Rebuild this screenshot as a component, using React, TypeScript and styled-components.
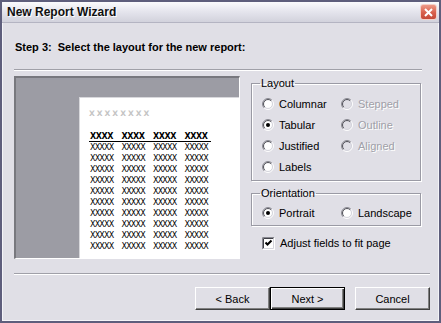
import React from "react"
import styled, { createGlobalStyle } from "styled-components"

const GlobalStyle = createGlobalStyle`
    html, body {
        margin: 0;
        padding: 0;
        background: #e0dfe6;
    }
    * {
        box-sizing: border-box;
    }
`

const FONT = `"Liberation Sans", Arial, sans-serif`

const Window = styled.div`
    width: 441px;
    height: 323px;
    display: flex;
    flex-direction: column;
    border: 2px solid #5e5e7c;
    box-shadow: inset 0 0 0 1px #f4f4f8;
    background: #e0dfe6;
    font-family: ${FONT};
    font-size: 11px;
    color: #000;
    overflow: hidden;
`

const TitleBar = styled.div`
    height: 21px;
    flex: none;
    display: flex;
    align-items: center;
    justify-content: space-between;
    padding: 0 2px 0 5px;
    background: linear-gradient(to bottom, #fbfbfd 0%, #e6e6ee 45%, #d2d2dc 100%);
    border-bottom: 1px solid #b4b4c2;
`

const Title = styled.div`
    font-weight: bold;
    font-size: 12px;
    color: #101010;
    text-shadow: 1px 1px 0 #ffffff;
`

const CloseButton = styled.div`
    width: 17px;
    height: 16px;
    border-radius: 3px;
    border: 1px solid #f4d0c8;
    background: linear-gradient(to bottom, #ee9a88 0%, #d8604c 55%, #c44a38 100%);
    display: flex;
    align-items: center;
    justify-content: center;
`

const Body = styled.div`
    flex: 1;
    display: flex;
    flex-direction: column;
    padding: 17px 9px 11px 12px;
`

const StepTitle = styled.div`
    font-weight: bold;
    font-size: 11px;
    line-height: 14px;
    padding-left: 1px;
    white-space: nowrap;
`

const Separator = styled.div<{ inset?: number }>`
    height: 2px;
    flex: none;
    margin-right: ${({ inset }) => inset || 0}px;
    border-top: 1px solid #a0a0a8;
    border-bottom: 1px solid #ffffff;
`

const Main = styled.div`
    display: flex;
    gap: 11px;
    margin: 5px 0 14px;
    height: 183px;
`

const Preview = styled.div`
    width: 226px;
    height: 183px;
    display: flex;
    justify-content: flex-end;
    align-items: flex-end;
    background: #9c9ca4;
    border-top: 2px solid #78787e;
    border-left: 2px solid #78787e;
    border-right: 1px solid #ffffff;
    border-bottom: 1px solid #ffffff;
`

const Page = styled.div`
    width: 160px;
    height: 161px;
    background: #ffffff;
    border-top: 1px solid #d8d8dc;
    border-left: 1px solid #d8d8dc;
    padding: 11px 0 0 9px;
    font-family: "DejaVu Sans", sans-serif;
`

const PageTitle = styled.div`
    font-weight: bold;
    font-size: 7.5px;
    line-height: 10px;
    letter-spacing: 2px;
    color: #c4c4c4;
`

const Table = styled.div`
    margin-top: 13px;
    width: 122px;
`

const HeaderRow = styled.div`
    display: grid;
    grid-template-columns: repeat(4, 31.5px);
    font-weight: bold;
    font-size: 8px;
    line-height: 9px;
    letter-spacing: -0.4px;
    padding-left: 1px;
    border-bottom: 1px solid #000;
`

const DataRow = styled.div`
    display: grid;
    grid-template-columns: repeat(4, 31.5px);
    font-size: 8px;
    line-height: 11px;
    letter-spacing: -0.8px;
    padding-left: 1px;
`

const Cell = styled.span`
    white-space: nowrap;
`

const Side = styled.div`
    width: 170px;
    display: flex;
    flex-direction: column;
`

const Group = styled.fieldset<{ gapTop?: number }>`
    margin: ${({ gapTop }) => gapTop || 0}px 0 0 0;
    padding: 3px 0 3px 10px;
    min-width: 0;
    border: 1px solid #9a9aa4;
    box-shadow: inset 1px 1px 0 #ffffff, 1px 1px 0 #ffffff;
`

const GroupLegend = styled.legend`
    padding: 0 1px;
    margin-left: -2px;
    line-height: 14px;
    font-size: 11px;
`

const OptionGrid = styled.div`
    display: grid;
    grid-template-columns: 79px 1fr;
    grid-auto-rows: 21px;
    align-items: center;
`

const Option = styled.label<{ disabled?: boolean }>`
    display: flex;
    align-items: center;
    gap: 5px;
    white-space: nowrap;
    color: ${({ disabled }) => (disabled ? "#a0a0a8" : "#000000")};
    text-shadow: ${({ disabled }) => (disabled ? "1px 1px 0 #ffffff" : "none")};
`

const CheckRow = styled.label`
    display: flex;
    align-items: center;
    gap: 5px;
    height: 16px;
    margin: 9px 0 0 11px;
    white-space: nowrap;
`

const Footer = styled.div`
    display: flex;
    justify-content: flex-end;
    margin-top: 12px;
`

const Button = styled.div<{ isDefault?: boolean; spaced?: boolean }>`
    width: 75px;
    height: 23px;
    display: flex;
    align-items: center;
    justify-content: center;
    margin-left: ${({ spaced }) => (spaced ? "10px" : "0")};
    background: #e0dfe6;
    border: 1px solid;
    border-color: ${({ isDefault }) => (isDefault ? "#000000" : "#ffffff #404040 #404040 #ffffff")};
    box-shadow: ${({ isDefault }) =>
        isDefault
            ? "inset 1px 1px 0 #ffffff, inset -1px -1px 0 #404040, inset -2px -2px 0 #808080"
            : "inset -1px -1px 0 #808080"};
    font-size: 11px;
`

const c = 6
const k = 0.7071

const arc = (r: number, firstHalf: boolean) => {
    const x1 = c - r * k
    const y1 = c + r * k
    const x2 = c + r * k
    const y2 = c - r * k
    return firstHalf
        ? `M ${x1} ${y1} A ${r} ${r} 0 0 1 ${x2} ${y2}`
        : `M ${x2} ${y2} A ${r} ${r} 0 0 1 ${x1} ${y1}`
}

const Radio: React.FC<{ checked?: boolean; disabled?: boolean }> = ({ checked, disabled }) => (
    <svg width="12" height="12" viewBox="0 0 12 12" style={{ flex: "none" }}>
        <circle cx="6" cy="6" r="4.5" fill={disabled ? "#e0dfe6" : "#ffffff"} />
        <path d={arc(5.5, true)} stroke="#888890" strokeWidth="1" fill="none" />
        <path d={arc(5.5, false)} stroke="#ffffff" strokeWidth="1" fill="none" />
        <path d={arc(4.5, true)} stroke="#505058" strokeWidth="1" fill="none" />
        <path d={arc(4.5, false)} stroke="#d4d4dc" strokeWidth="1" fill="none" />
        {checked && <circle cx="6" cy="6" r="2" fill="#000000" />}
    </svg>
)

const Checkbox: React.FC<{ checked?: boolean }> = ({ checked }) => (
    <svg width="13" height="13" viewBox="0 0 13 13" style={{ flex: "none" }}>
        <rect x="0" y="0" width="13" height="13" fill="#ffffff" />
        <path d="M0.5 12.5 V0.5 H12.5" stroke="#888890" fill="none" />
        <path d="M0.5 12.5 H12.5 V0.5" stroke="#ffffff" fill="none" />
        <path d="M1.5 11.5 V1.5 H11.5" stroke="#404048" fill="none" />
        <path d="M1.5 11.5 H11.5 V1.5" stroke="#d4d4dc" fill="none" />
        {checked && <path d="M3.5 5.5 L5.5 7.5 L9.5 3.5" stroke="#000000" strokeWidth="2" fill="none" />}
    </svg>
)

const layoutOptions = [
    { label: "Columnar" },
    { label: "Stepped", disabled: true },
    { label: "Tabular", checked: true },
    { label: "Outline", disabled: true },
    { label: "Justified" },
    { label: "Aligned", disabled: true },
    { label: "Labels" },
]

const orientationOptions = [
    { label: "Portrait", checked: true },
    { label: "Landscape" },
]

const rows = Array.from({ length: 10 })

const App: React.FC = () => {
    return (
        <>
            <GlobalStyle />
            <Window>
                <TitleBar>
                    <Title>New Report Wizard</Title>
                    <CloseButton>
                        <svg width="9" height="9" viewBox="0 0 9 9">
                            <path d="M1 1 L8 8 M8 1 L1 8" stroke="#ffffff" strokeWidth="2" />
                        </svg>
                    </CloseButton>
                </TitleBar>
                <Body>
                    <StepTitle>Step 3:&nbsp; Select the layout for the new report:</StepTitle>
                    <Separator inset={8} style={{ marginTop: 15 }} />
                    <Main>
                        <Preview>
                            <Page>
                                <PageTitle>XXXXXXXX</PageTitle>
                                <Table>
                                    <HeaderRow>
                                        {[0, 1, 2, 3].map(i => <Cell key={i}>XXXX</Cell>)}
                                    </HeaderRow>
                                    {rows.map((_, r) => (
                                        <DataRow key={r}>
                                            {[0, 1, 2, 3].map(i => <Cell key={i}>XXXXX</Cell>)}
                                        </DataRow>
                                    ))}
                                </Table>
                            </Page>
                        </Preview>
                        <Side>
                            <Group>
                                <GroupLegend>Layout</GroupLegend>
                                <OptionGrid>
                                    {layoutOptions.map(o => (
                                        <Option key={o.label} disabled={o.disabled}>
                                            <Radio checked={o.checked} disabled={o.disabled} />
                                            {o.label}
                                        </Option>
                                    ))}
                                </OptionGrid>
                            </Group>
                            <Group gapTop={5} style={{ paddingTop: 2, paddingBottom: 2 }}>
                                <GroupLegend>Orientation</GroupLegend>
                                <OptionGrid>
                                    {orientationOptions.map(o => (
                                        <Option key={o.label}>
                                            <Radio checked={o.checked} />
                                            {o.label}
                                        </Option>
                                    ))}
                                </OptionGrid>
                            </Group>
                            <CheckRow>
                                <Checkbox checked />
                                Adjust fields to fit page
                            </CheckRow>
                        </Side>
                    </Main>
                    <Separator />
                    <Footer>
                        <Button>&lt; Back</Button>
                        <Button isDefault>Next &gt;</Button>
                        <Button spaced>Cancel</Button>
                    </Footer>
                </Body>
            </Window>
        </>
    )
}

export default App
